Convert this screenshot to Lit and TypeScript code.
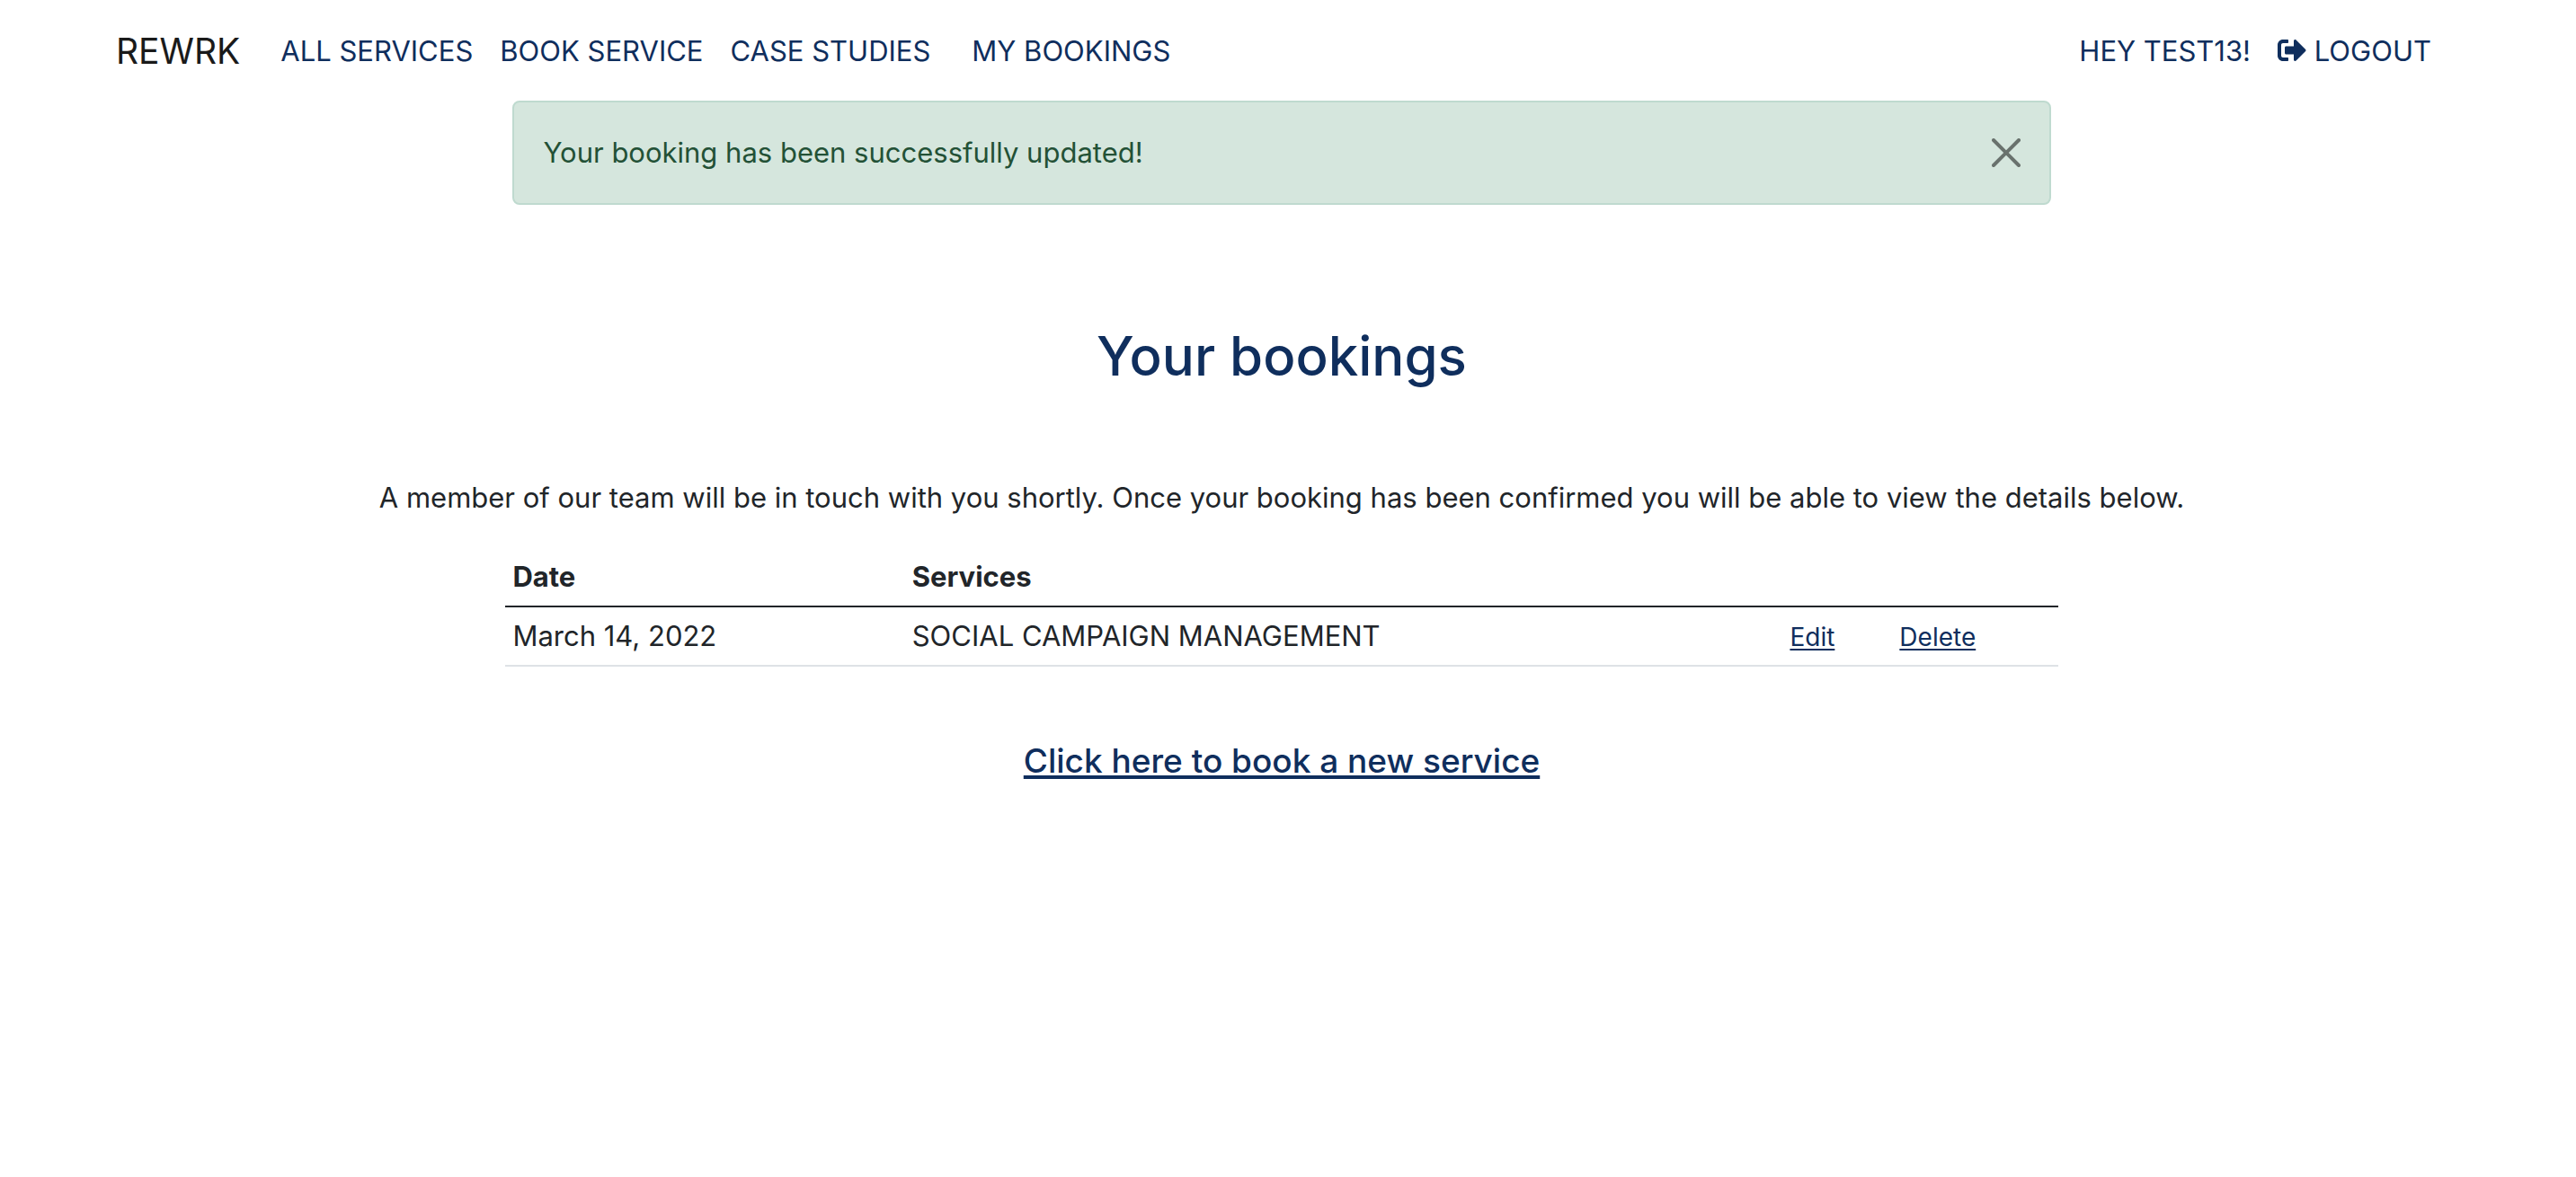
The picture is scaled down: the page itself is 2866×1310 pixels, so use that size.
import { LitElement, html, css } from "lit";
import { customElement, state } from "lit/decorators.js";

interface Booking {
  date: string;
  service: string;
}

@customElement("app-root")
export class AppRoot extends LitElement {
  static styles = css`
    :host {
      display: block;
      padding-right: 14px;
      color: #212529;
      font-family: Inter, "Liberation Sans", sans-serif;
      font-size: 31px;
      line-height: 48px;
    }
    a {
      color: #0f2e5d;
    }
    .navbar {
      display: flex;
      align-items: center;
      justify-content: space-between;
      min-height: 112px;
      padding: 2px 132px 0 129px;
      box-sizing: border-box;
      white-space: nowrap;
    }
    .group {
      display: flex;
      align-items: center;
    }
    .brand {
      margin-right: 30px;
      color: #1a1a1a;
      font-size: 39px;
      text-decoration: none;
    }
    .link {
      padding: 0 15px;
      text-decoration: none;
    }
    .own {
      margin-left: 16px;
    }
    .icon {
      width: 32px;
      height: 32px;
      vertical-align: -4px;
      fill: currentColor;
    }
    .alert {
      display: flex;
      align-items: center;
      justify-content: space-between;
      width: 60%;
      margin: 0 auto;
      padding: 32px;
      box-sizing: border-box;
      border: 2px solid #bfdacf;
      border-radius: 8px;
      background: #d5e6dd;
      color: #235136;
    }
    .close {
      display: flex;
      padding: 0;
      border: 0;
      background: none;
      color: #000;
      opacity: 0.5;
      cursor: pointer;
    }
    .close svg {
      width: 32px;
      height: 32px;
    }
    .content {
      display: flex;
      flex-direction: column;
      align-items: center;
      padding-top: 130px;
      text-align: center;
    }
    .title {
      margin: 0 0 96px;
      color: #0f2e5d;
      font-size: 60px;
      font-weight: 500;
      line-height: 76px;
    }
    .note {
      margin: 0 0 32px;
    }
    .bookings {
      width: calc(60% + 16px);
      border-collapse: separate;
      border-spacing: 0;
      table-layout: fixed;
      text-align: left;
    }
    .bookings th,
    .bookings td {
      height: 48px;
      padding: 8px;
      border-bottom: 2px solid #dee2e6;
    }
    .bookings th {
      border-bottom-color: #212529;
      font-weight: 700;
    }
    .bookings .date {
      width: 24.8%;
    }
    .bookings .actions {
      width: 16.8%;
    }
    .buttons {
      display: flex;
      gap: 72px;
      height: 48px;
      font-size: 28px;
      line-height: 50px;
    }
    .buttons a {
      text-decoration-thickness: 2px;
      text-underline-offset: 3px;
    }
    .new {
      margin: 81px 0 0;
      font-size: 37px;
      font-weight: 500;
      line-height: 48px;
    }
    .new a {
      text-decoration-thickness: 4px;
      text-underline-offset: 3px;
      text-decoration-skip-ink: none;
    }
  `;

  @state() private alertOpen = true;

  private bookings: Booking[] = [
    { date: "March 14, 2022", service: "SOCIAL CAMPAIGN MANAGEMENT" },
  ];

  render() {
    return html`
      <nav class="navbar">
        <div class="group">
          <a class="brand" href="#">REWRK</a>
          <a class="link" href="#services">ALL SERVICES</a>
          <a class="link" href="#book">BOOK SERVICE</a>
          <a class="link" href="#cases">CASE STUDIES</a>
          <a class="link own" href="#bookings">MY BOOKINGS</a>
        </div>
        <div class="group">
          <a class="link" href="#account">HEY TEST13!</a>
          <a class="link" href="#logout"
            ><svg class="icon" viewBox="0 0 512 512" aria-hidden="true">
              <path
                d="M497 273L329 441c-15 15-41 4.500-41-17v-96H152c-13.300 0-24-10.700-24-24v-96c0-13.300 10.700-24 24-24h136V88c0-21.400 25.900-32 41-17l168 168c9.300 9.400 9.300 24.600 0 34zM192 436v-40c0-6.600-5.400-12-12-12H96c-17.700 0-32-14.300-32-32V160c0-17.700 14.300-32 32-32h84c6.600 0 12-5.400 12-12V76c0-6.600-5.400-12-12-12H96c-53 0-96 43-96 96v192c0 53 43 96 96 96h84c6.600 0 12-5.400 12-12z"
              /></svg
            > LOGOUT</a
          >
        </div>
      </nav>
      ${this.alertOpen
        ? html`<div class="alert" role="alert">
            <span>Your booking has been successfully updated!</span>
            <button
              class="close"
              aria-label="Close"
              @click=${() => (this.alertOpen = false)}
            >
              <svg viewBox="0 0 16 16" aria-hidden="true">
                <path
                  d="M.293.293a1 1 0 011.414 0L8 6.586 14.293.293a1 1 0 111.414 1.414L9.414 8l6.293 6.293a1 1 0 01-1.414 1.414L8 9.414l-6.293 6.293a1 1 0 01-1.414-1.414L6.586 8 .293 1.707a1 1 0 010-1.414z"
                />
              </svg>
            </button>
          </div>`
        : null}
      <main class="content">
        <h1 class="title">Your bookings</h1>
        <p class="note">
          A member of our team will be in touch with you shortly. Once your
          booking has been confirmed you will be able to view the details below.
        </p>
        <table class="bookings">
          <thead>
            <tr>
              <th class="date" scope="col">Date</th>
              <th scope="col">Services</th>
              <th class="actions"></th>
            </tr>
          </thead>
          <tbody>
            ${this.bookings.map(
              (b) => html`<tr>
                <td>${b.date}</td>
                <td>${b.service}</td>
                <td>
                  <div class="buttons">
                    <a href="#edit">Edit</a>
                    <a href="#delete">Delete</a>
                  </div>
                </td>
              </tr>`
            )}
          </tbody>
        </table>
        <h4 class="new"><a href="#book">Click here to book a new service</a></h4>
      </main>
    `;
  }
}
